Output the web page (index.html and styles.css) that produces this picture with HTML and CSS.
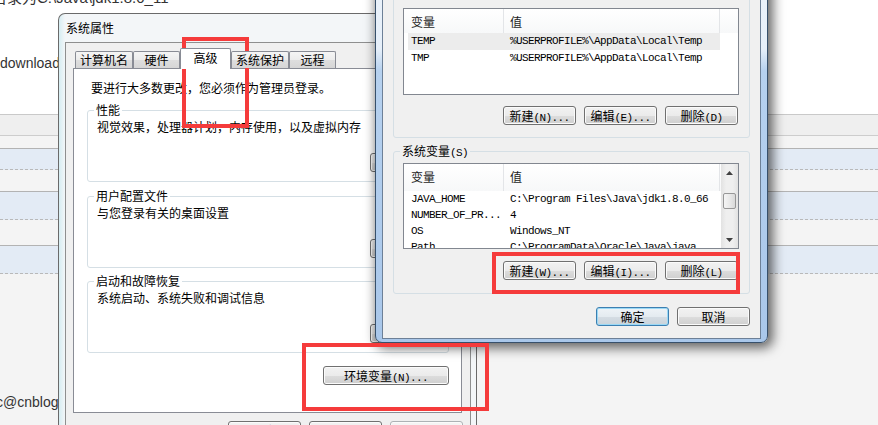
FILE: index.html
```html
<!DOCTYPE html>
<html lang="zh-CN">
<head>
<meta charset="utf-8">
<title>环境变量</title>
<link rel="stylesheet" href="styles.css">
</head>
<body>
<div class="page">
  <div class="hero">
    <p class="hero-line hero-path">目录为C:\Java\jdk1.8.0_11</p>
    <p class="hero-line hero-dl">download</p>
  </div>
  <div class="band"></div>
  <div class="row row-a"></div>
  <div class="gap gap-a"></div>
  <div class="row row-b"></div>
  <div class="gap gap-b"></div>
  <div class="row row-b"></div>
  <p class="foot">c@cnblogs</p>
</div>

<section class="win sys">
  <div class="sys-title">系统属性</div>
  <div class="sys-client">
    <div class="tabs">
      <span class="tab">计算机名</span>
      <span class="tab">硬件</span>
      <span class="tab tab-on">高级</span>
      <span class="tab">系统保护</span>
      <span class="tab">远程</span>
    </div>
    <div class="panel">
      <p class="notice">要进行大多数更改，您必须作为管理员登录。</p>
      <div class="group sys-group">
        <span class="legend">性能</span>
        <p class="group-text">视觉效果，处理器计划，内存使用，以及虚拟内存</p>
        <div class="group-actions"><button class="btn btn-set">设置<span class="lat">(S)...</span></button></div>
      </div>
      <div class="group sys-group">
        <span class="legend">用户配置文件</span>
        <p class="group-text">与您登录有关的桌面设置</p>
        <div class="group-actions"><button class="btn btn-set">设置<span class="lat">(E)...</span></button></div>
      </div>
      <div class="group sys-group">
        <span class="legend">启动和故障恢复</span>
        <p class="group-text">系统启动、系统失败和调试信息</p>
        <div class="group-actions"><button class="btn btn-set">设置<span class="lat">(T)...</span></button></div>
      </div>
      <div class="env-row"><button class="btn btn-env">环境变量<span class="lat">(N)...</span></button></div>
    </div>
    <div class="dlg-buttons">
      <button class="btn">确定</button>
      <button class="btn">取消</button>
      <button class="btn" disabled>应用<span class="lat">(A)</span></button>
    </div>
  </div>
</section>

<section class="win env">
  <div class="env-title">环境变量</div>
  <div class="env-client">
    <div class="group env-group">
      <span class="legend">Administrator 的用户变量<span class="lat">(U)</span></span>
      <div class="listbox list-user">
        <div class="lv-main">
          <div class="lv-head"><span class="lv-h1">变量</span><span class="lv-h2">值</span></div>
          <div class="lv-row lv-sel"><span class="lv-c1">TEMP</span><span class="lv-c2">%USERPROFILE%\AppData\Local\Temp</span></div>
          <div class="lv-row"><span class="lv-c1">TMP</span><span class="lv-c2">%USERPROFILE%\AppData\Local\Temp</span></div>
        </div>
      </div>
      <div class="btn-row">
        <button class="btn">新建<span class="lat">(N)...</span></button>
        <button class="btn">编辑<span class="lat">(E)...</span></button>
        <button class="btn">删除<span class="lat">(D)</span></button>
      </div>
    </div>
    <div class="group env-group">
      <span class="legend">系统变量<span class="lat">(S)</span></span>
      <div class="listbox list-sys">
        <div class="lv-main">
          <div class="lv-head"><span class="lv-h1">变量</span><span class="lv-h2">值</span></div>
          <div class="lv-row"><span class="lv-c1">JAVA_HOME</span><span class="lv-c2">C:\Program Files\Java\jdk1.8.0_66</span></div>
          <div class="lv-row"><span class="lv-c1">NUMBER_OF_PR...</span><span class="lv-c2">4</span></div>
          <div class="lv-row"><span class="lv-c1">OS</span><span class="lv-c2">Windows_NT</span></div>
          <div class="lv-row"><span class="lv-c1">Path</span><span class="lv-c2">C:\ProgramData\Oracle\Java\java</span></div>
        </div>
        <div class="vscroll">
          <div class="sb-arrow"><svg width="7" height="4" viewBox="0 0 7 4"><polygon points="3.5,0 7,4 0,4" fill="#404040"/></svg></div>
          <div class="sb-track"><div class="sb-thumb"></div></div>
          <div class="sb-arrow"><svg width="7" height="4" viewBox="0 0 7 4"><polygon points="0,0 7,0 3.5,4" fill="#404040"/></svg></div>
        </div>
      </div>
      <div class="btn-row">
        <button class="btn">新建<span class="lat">(W)...</span></button>
        <button class="btn">编辑<span class="lat">(I)...</span></button>
        <button class="btn">删除<span class="lat">(L)</span></button>
      </div>
    </div>
    <div class="env-foot">
      <button class="btn btn-default">确定</button>
      <button class="btn">取消</button>
    </div>
  </div>
</section>

<div class="mark mark-tab"></div>
<div class="mark mark-env"></div>
<div class="mark mark-sys"></div>
</body>
</html>
```

FILE: styles.css
```css
* { box-sizing: border-box; }
html, body { margin: 0; padding: 0; }
body {
  width: 878px;
  height: 425px;
  overflow: hidden;
  position: relative;
  background: #f4f4f4;
  font-family: "Liberation Sans", "Noto Sans CJK SC", sans-serif;
}

/* background web page */
.hero {
  height: 114px;
  background: #fff;
  overflow: hidden;
  color: #333;
}
.hero-line { margin: 0; white-space: nowrap; line-height: 20px; }
.hero-path { font-size: 15px; margin: -12px 0 0 -8px; }
.hero-dl { font-size: 14px; margin-top: 45px; }
.band {
  height: 22px;
  background: #efefef;
  border-top: 1px solid #c9c9c9;
  border-bottom: 1px solid #cdcdcd;
}
.row {
  background: #e3ebf5;
  border-top: 1px solid #b3b3b3;
  border-bottom: 1px dashed #b9b9b9;
}
.row-a { height: 22px; margin-top: 12px; }
.row-b { height: 29px; }
.gap-a { height: 21px; }
.gap-b { height: 25px; }
.foot {
  margin: 119px 0 0 -4px;
  font-size: 14px;
  line-height: 18px;
  color: #333;
  white-space: nowrap;
}

/* windows */
.win {
  position: absolute;
  font: 12px/14px "Noto Sans CJK SC", sans-serif;
  color: #000;
}
.win p { margin: 0; }

.btn {
  width: 73px;
  height: 19px;
  padding: 0;
  border: 1px solid #707070;
  border-radius: 3px;
  background: linear-gradient(#f2f2f2 0, #ebebeb 50%, #dddddd 51%, #cfcfcf 100%);
  box-shadow: inset 0 0 0 1px #fbfbfb;
  font: 12px/17px "Noto Sans CJK SC", sans-serif;
  color: #000;
  white-space: nowrap;
  flex: none;
}
.btn:disabled {
  color: #8a8a8a;
  border-color: #adb2b5;
  background: #f4f4f4;
}
.btn-default {
  border-color: #3c7fb1;
  box-shadow: inset 0 0 0 1px #9ad8f5;
  background: linear-gradient(#eef3f7 0, #e4ebf0 50%, #d5dde4 51%, #cad3da 100%);
}
.lat {
  font-family: "Liberation Mono", monospace;
  font-size: 11px;
  letter-spacing: -0.6px;
}

.group {
  position: relative;
  border: 1px solid #d5dfe5;
  border-radius: 3px;
}
.legend {
  position: absolute;
  top: -8px;
  left: 6px;
  padding: 0 2px;
  line-height: 14px;
  background: #fff;
  white-space: nowrap;
}

/* 系统属性 */
.sys {
  left: 58px;
  top: 13px;
  width: 419px;
  height: 440px;
  padding: 0 5px 0 6px;
  border: 1px solid #6a6a6a;
  border-bottom: none;
  border-radius: 7px 7px 0 0;
  background: linear-gradient(90deg, #d6edf2 0, #f3f6f8 6px, #f3f6f8 100%);
  display: flex;
  flex-direction: column;
}
.sys-title {
  flex: none;
  height: 28px;
  line-height: 28px;
  padding-left: 1px;
}
.sys-client {
  flex: 1;
  border: 1px solid #8e8f8f;
  background: #f0f0f0;
  padding: 5px 8px 0 7px;
}
.tabs {
  display: flex;
  align-items: flex-end;
  height: 20px;
  padding-left: 2px;
  position: relative;
  z-index: 1;
}
.tab {
  height: 17px;
  min-width: 47px;
  padding: 0 4px;
  border: 1px solid #898c95;
  border-bottom: none;
  border-radius: 2px 2px 0 0;
  background: linear-gradient(#f5f5f5 0, #ececec 50%, #dedede 51%, #d6d6d6 100%);
  text-align: center;
  line-height: 16px;
  white-space: nowrap;
}
.tab-on {
  height: 21px;
  min-width: 51px;
  margin-bottom: -1px;
  background: #fff;
  line-height: 18px;
}
.panel {
  height: 345px;
  border: 1px solid #898c95;
  background: #fff;
  padding: 0 12px 0 13px;
}
.notice { margin: 12px 0 0 4px !important; }
.sys-group {
  height: 72px;
  margin-top: 14px;
  padding: 9px 3px 0 9px;
}
.notice + .sys-group { margin-top: 15px; }
.sys-group + .sys-group + .sys-group { margin-top: 13px; }
.group-actions {
  display: flex;
  justify-content: flex-end;
  margin-top: 19px;
}
.btn-set { width: 75px; }
.env-row {
  display: flex;
  justify-content: flex-end;
  margin-top: 13px;
}
.btn-env { width: 126px; }
.dlg-buttons {
  display: flex;
  justify-content: flex-end;
  gap: 8px;
  margin: 8px -1px 0 0;
}

/* 环境变量 */
.env {
  left: 375px;
  top: -70px;
  width: 393px;
  padding: 0 6px 3px;
  border: 1px solid #37506b;
  border-radius: 7px;
  background: linear-gradient(#eef4fb 0, #e6eff9 118px, #b6d1ef 140px, #a9c7ea 100%);
  box-shadow: 3px 3px 12px 2px rgba(0, 0, 0, 0.6);
}
.env-title {
  height: 28px;
  line-height: 28px;
  padding-left: 4px;
}
.env-client {
  border: 1px solid #6d8097;
  background: #f0f0f0;
  padding: 0 10px 12px;
}
.env .legend { background: #f0f0f0; }
.env-group {
  margin-top: 10px;
  padding: 37px 10px 12px 9px;
}
.env-group + .env-group {
  margin-top: 13px;
  padding-top: 11px;
  padding-bottom: 13px;
}
.listbox {
  border: 1px solid #828790;
  background: #fff;
  overflow: hidden;
  display: flex;
}
.list-user { height: 87px; }
.list-sys { height: 86px; }
.lv-main { flex: 1; min-width: 0; }
.lv-head {
  display: flex;
  height: 24px;
  background: linear-gradient(#ffffff, #f7f8f9);
}
.list-sys .lv-head { height: 27px; }
.lv-h1, .lv-h2 {
  padding-top: 2px;
  line-height: 22px;
  border-right: 1px solid #e3e5e8;
  color: #1e1e1e;
}
.lv-h1 { width: 100px; padding-left: 7px; }
.lv-h2 { width: 216px; padding-left: 6px; }
.lv-row {
  display: flex;
  width: 312px;
  margin-left: 4px;
  height: 17px;
  line-height: 17px;
  font-family: "Liberation Mono", monospace;
  font-size: 11px;
  letter-spacing: -0.6px;
  white-space: nowrap;
}
.list-sys .lv-row { height: 16px; line-height: 16px; }
.lv-sel { background: #ececec; }
.lv-c1 { width: 96px; flex: none; padding-left: 3px; overflow: hidden; }
.lv-c2 { padding-left: 6px; }
.vscroll {
  width: 17px;
  flex: none;
  display: flex;
  flex-direction: column;
  background: linear-gradient(90deg, #e2e2e2, #efefef 30%, #efefef 70%, #e2e2e2);
}
.sb-arrow {
  height: 17px;
  flex: none;
  display: flex;
  align-items: center;
  justify-content: center;
}
.sb-arrow svg { display: block; }
.sb-track { flex: 1; }
.sb-thumb {
  height: 16px;
  margin: 12px 2px 0;
  border: 1px solid #979797;
  border-radius: 2px;
  background: linear-gradient(90deg, #f5f5f5, #e9e9e9 50%, #d9d9d9);
}
.btn-row {
  display: flex;
  justify-content: flex-end;
  gap: 8px;
  padding-right: 1px;
  margin-top: 11px;
}
.env-group + .env-group .btn-row { margin-top: 12px; }
.env-foot {
  display: flex;
  justify-content: flex-end;
  gap: 8px;
  margin-top: 13px;
}

/* red annotations */
.mark {
  position: absolute;
  border: 4px solid #f53b3b;
}
.mark-tab { left: 182px; top: 37px; width: 67px; height: 91px; }
.mark-env { left: 302px; top: 343px; width: 187px; height: 68px; }
.mark-sys { left: 492px; top: 252px; width: 248px; height: 42px; }
```
